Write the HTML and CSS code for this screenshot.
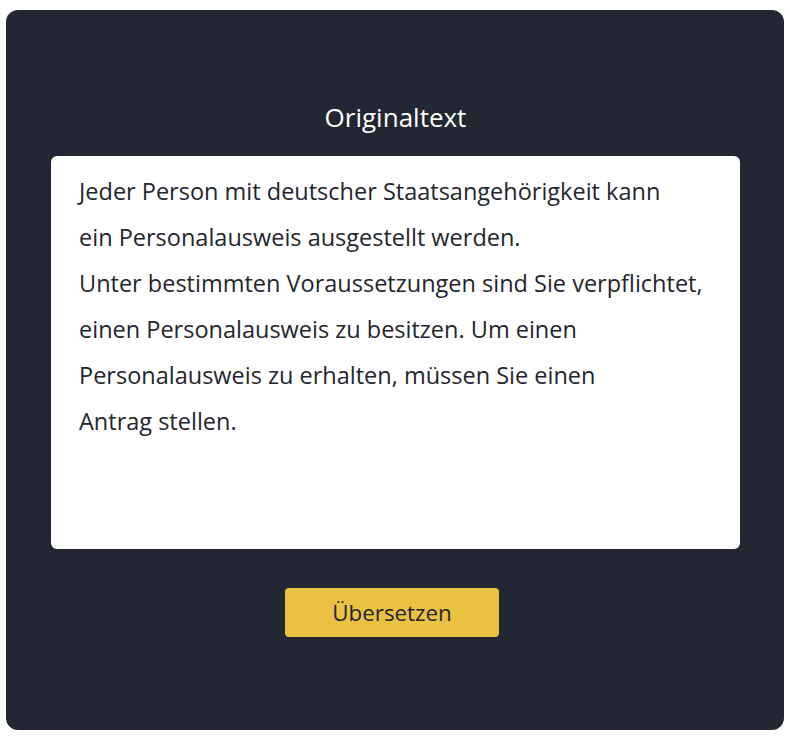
FILE: index.html
```html
<!DOCTYPE html>
<html lang="de">
<head>
<meta charset="utf-8">
<link rel="stylesheet" href="styles.css">
</head>
<body>
<div class="panel">
  <h1 class="title">Originaltext</h1>
  <div class="textbox">Jeder Person mit deutscher Staatsangehörigkeit kann<br>ein Personalausweis ausgestellt werden.<br>Unter bestimmten Voraussetzungen sind Sie verpflichtet,<br>einen Personalausweis zu besitzen. Um einen<br>Personalausweis zu erhalten, müssen Sie einen<br>Antrag stellen.</div>
  <button class="btn">Übersetzen</button>
</div>
</body>
</html>
```
FILE: styles.css
```css
html, body {
  margin: 0;
  padding: 0;
  background: #ffffff;
}
body {
  font-family: "Open Sans", "Noto Sans", sans-serif;
}
.panel {
  margin: 10px 6px;
  width: 778px;
  height: 720px;
  box-sizing: border-box;
  background: #222733;
  border-radius: 12px;
  padding: 91px 44px 0 45px;
  display: flex;
  flex-direction: column;
  align-items: center;
}
.title {
  margin: 0;
  font-size: 26px;
  line-height: 32px;
  font-weight: 400;
  color: #ffffff;
}
.textbox {
  margin-top: 23px;
  width: 689px;
  height: 393px;
  box-sizing: border-box;
  background: #ffffff;
  border-radius: 6px;
  padding: 12px 20px 0 28px;
  font-size: 23.5px;
  line-height: 46px;
  color: #23262d;
  white-space: nowrap;
}
.btn {
  margin: 39px 7px 0 0;
  width: 214px;
  height: 49px;
  border: none;
  border-radius: 4px;
  background: #ebc142;
  color: #23262d;
  font-family: "Open Sans", "Noto Sans", sans-serif;
  font-size: 22.3px;
  padding: 0;
}
```
